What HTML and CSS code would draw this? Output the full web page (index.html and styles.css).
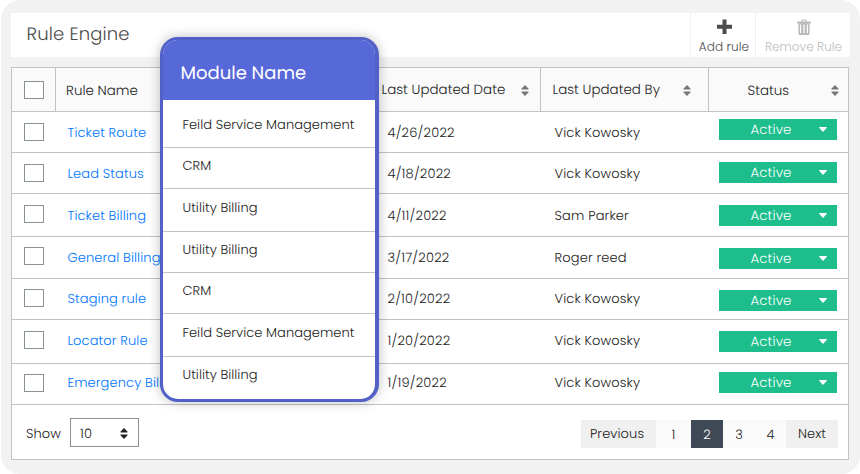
FILE: index.html
```html
<!DOCTYPE html>
<html lang="en">
<head>
<meta charset="utf-8">
<title>Rule Engine</title>
<link rel="stylesheet" href="styles.css">
</head>
<body>
<svg width="0" height="0" class="defs" aria-hidden="true">
  <symbol id="sort" viewBox="0 0 8 11"><path d="M4 0 7.6 3.7Q8 4.5 7 4.5H1Q0 4.5.4 3.7ZM4 11 .4 7.3Q0 6.5 1 6.5H7Q8 6.5 7.6 7.3Z"/></symbol>
  <symbol id="caret" viewBox="0 0 8 5"><path d="M.6 0H7.4Q8.2.3 7.6 1L4.5 4.6Q4 5 3.5 4.6L.4 1Q-.2.3.6 0Z"/></symbol>
</svg>
<main class="panel">
  <header class="toolbar">
    <h1 class="title">Rule Engine</h1>
    <button class="tool add">
      <svg width="15" height="15" viewBox="0 0 15 15"><path d="M5.5 0h4v5.3H15v3.9H9.5V14.5h-4V9.2H0V5.3h5.5Z"/></svg>
      <span>Add rule</span>
    </button>
    <button class="tool remove">
      <svg width="14" height="16" viewBox="0 0 14 16"><path fill-rule="evenodd" d="M4 2.6 4.8.5H9.2L10 2.6H14V4.2H12.6V14.4Q12.4 15.9 11 15.9H3Q1.6 15.9 1.4 14.4V4.2H0V2.6ZM5.2 2.6H8.8L8.5 1.6H5.5ZM3 5.5V13.9H4.1V5.5ZM6.4 5.5V13.9H7.6V5.5ZM9.9 5.5V13.9H11V5.5Z"/></svg>
      <span>Remove Rule</span>
    </button>
  </header>

  <section class="table">
    <div class="row head">
      <div class="c-check"><span class="box"></span></div>
      <div class="c-name">Rule Name</div>
      <div class="c-date"><span>Last Updated Date</span><svg class="sort"><use href="#sort"/></svg></div>
      <div class="c-by"><span>Last Updated By</span><svg class="sort"><use href="#sort"/></svg></div>
      <div class="c-status"><span>Status</span><svg class="sort"><use href="#sort"/></svg></div>
    </div>
    <div class="row r1"><div class="c-check"><span class="box"></span></div><a class="c-name">Ticket Route</a><div class="c-date">4/26/2022</div><div class="c-by">Vick Kowosky</div><div class="c-status"><span class="badge">Active<svg class="caret"><use href="#caret"/></svg></span></div></div>
    <div class="row r2"><div class="c-check"><span class="box"></span></div><a class="c-name">Lead Status</a><div class="c-date">4/18/2022</div><div class="c-by">Vick Kowosky</div><div class="c-status"><span class="badge">Active<svg class="caret"><use href="#caret"/></svg></span></div></div>
    <div class="row r3"><div class="c-check"><span class="box"></span></div><a class="c-name">Ticket Billing</a><div class="c-date">4/11/2022</div><div class="c-by">Sam Parker</div><div class="c-status"><span class="badge">Active<svg class="caret"><use href="#caret"/></svg></span></div></div>
    <div class="row r4"><div class="c-check"><span class="box"></span></div><a class="c-name">General Billing</a><div class="c-date">3/17/2022</div><div class="c-by">Roger reed</div><div class="c-status"><span class="badge">Active<svg class="caret"><use href="#caret"/></svg></span></div></div>
    <div class="row r5"><div class="c-check"><span class="box"></span></div><a class="c-name">Staging rule</a><div class="c-date">2/10/2022</div><div class="c-by">Vick Kowosky</div><div class="c-status"><span class="badge">Active<svg class="caret"><use href="#caret"/></svg></span></div></div>
    <div class="row r6"><div class="c-check"><span class="box"></span></div><a class="c-name">Locator Rule</a><div class="c-date">1/20/2022</div><div class="c-by">Vick Kowosky</div><div class="c-status"><span class="badge">Active<svg class="caret"><use href="#caret"/></svg></span></div></div>
    <div class="row r7"><div class="c-check"><span class="box"></span></div><a class="c-name">Emergency Billing</a><div class="c-date">1/19/2022</div><div class="c-by">Vick Kowosky</div><div class="c-status"><span class="badge">Active<svg class="caret"><use href="#caret"/></svg></span></div></div>
    <footer class="foot">
      <span class="show">Show</span>
      <span class="select">10<svg class="sort"><use href="#sort"/></svg></span>
      <nav class="pager">
        <span class="pg prev">Previous</span><span class="pg one">1</span><span class="pg current">2</span><span class="pg">3</span><span class="pg four">4</span><span class="pg next">Next</span>
      </nav>
    </footer>
  </section>

  <aside class="module">
    <h2>Module Name</h2>
    <ul>
      <li>Feild Service Management</li>
      <li>CRM</li>
      <li>Utility Billing</li>
      <li>Utility Billing</li>
      <li>CRM</li>
      <li>Feild Service Management</li>
      <li>Utility Billing</li>
    </ul>
  </aside>
</main>
</body>
</html>
```
FILE: styles.css
```css
* { box-sizing: border-box; }
body {
  margin: 0;
  background: #fff;
  color: #222;
  font: 300 13px/20px Poppins, Inter, "Open Sans", sans-serif;
  font-feature-settings: "cv11";
  letter-spacing: .1px;
  text-rendering: geometricPrecision;
}
.defs { position: absolute; }
.panel {
  position: relative;
  width: 859px;
  height: 474px;
  margin-left: 1px;
  padding: 13px 10px 14px;
  background: #f2f2f2;
  border-radius: 19px;
}
.toolbar { display: flex; height: 44px; background: #fff; }
.title { flex: 1; margin: 0; padding-left: 15.5px; font-size: 18px; font-weight: 300; line-height: 44px; color: #4c4c4c; letter-spacing: .15px; }
.tool {
  display: flex; flex-direction: column; align-items: center;
  border: 0; border-left: 1px solid #f0f0f0; background: none; padding: 6px 0 0;
  font: inherit; font-size: 12px; line-height: 17px; color: #555; font-feature-settings: inherit;
}
.tool svg { flex: none; height: 16px; margin-bottom: 3px; fill: currentColor; }
.add { width: 65px; padding-left: 2px; letter-spacing: .1px; color: #4c4c4c; }
.remove { width: 95px; padding-left: 1px; color: #bbb; letter-spacing: .05px; }

.table { margin-top: 10px; width: 838px; border: 1px solid #c2c3c8; background: #fff; }
.row { display: grid; grid-template-columns: 44px 320px 165px 168px 1fr; border-bottom: 1px solid #c2c3c8; height: 41px; --text: 11px; --box: 11px; --badge: 11px; }
.head { height: 44px; background: #fafafa; --text: 12px; --box: 13px; font-size: 13.4px; }
.r1 { --badge: 7px; }
.r2 { --badge: 9px; }
.r3 { height: 43px; --text: 12px; }
.r4 { height: 42px; --box: 10px; }
.r5 { --text: 10px; --box: 10px; }
.r6 { height: 44px; }
.r7 { --text: 9px; --box: 10px; --badge: 8px; }
.row > * { padding-top: var(--text); white-space: nowrap; }
.row > .c-check { padding: var(--box) 0 0 12px; }
.box { display: block; width: 20px; height: 18px; border: 1px solid #879290; background: #fff; }
.c-name { padding-left: 11.5px; color: #0075ff; letter-spacing: .12px; }
.c-date { padding-left: 11.5px; letter-spacing: .2px; }
.c-by { padding-left: 13.5px; letter-spacing: .15px; }
.row:not(.head) > .c-status { padding: var(--badge) 0 0 10px; }
.head > * { display: flex; letter-spacing: .03px; }
.head > .c-check { border-right: 1px solid #c2c3c8; }
.head > .c-name { padding-top: 13px; padding-left: 10px; color: inherit; }
.head > .c-date { padding-left: 5.5px; border-right: 1px solid #c2c3c8; }
.head > .c-by { padding-left: 11.5px; border-right: 1px solid #c2c3c8; }
.head > .c-status { padding-top: 13px; padding-left: 38.5px; }
.sort { width: 8px; height: 11px; margin: 5px 11px 0 auto; fill: #777; }
.c-by .sort { margin-right: 17px; }
.c-status .sort { margin: 4px 9px 0 auto; }
.badge {
  display: flex; align-items: center; width: 118px; height: 21px; padding: 0 10px 0 31.5px;
  background: #1dbe8b; color: #fff; font-size: 13.3px; letter-spacing: .15px;
}
.caret { width: 8px; height: 5px; margin-left: auto; fill: #fff; }

.foot { display: flex; height: 54px; padding: 13px 10px 0 14px; }
.show { width: 44px; padding-top: 6px; letter-spacing: .1px; }
.select { display: flex; width: 69px; height: 29px; padding: 5px 10px 0 9px; border: 1px solid #879290; }
.select .sort { margin: 4px 0 0 auto; fill: #222; }
.pager { display: flex; margin: 2px 0 0 auto; height: 28px; text-align: center; line-height: 29px; }
.pg { width: 32px; background: #fafafa; }
.prev { width: 75px; padding-right: 3px; background: #f0f0f0; line-height: 28px; }
.one { width: 35px; }
.current { background: #3f4a56; color: #fff; }
.four { width: 31px; }
.next { width: 52px; background: #f0f0f0; line-height: 28px; }

.module {
  position: absolute; left: 159px; top: 37px; width: 219px; height: 365px;
  border: 3px solid #5261c8; border-right-width: 4px; border-radius: 18px;
  background: #fff; box-shadow: 0 0 12px rgba(0, 0, 0, .26); overflow: hidden;
}
.module h2 { margin: 0; height: 60px; padding: 22px 0 0 17.5px; background: #5768d9; color: #fff; font-size: 18px; line-height: 24px; font-weight: 400; letter-spacing: 0; }
.module ul { list-style: none; margin: 0; padding: 0; }
.module li { height: 41px; padding: 8px 0 0 19.5px; border-bottom: 1px solid #c2c3c8; letter-spacing: .06px; }
.module li:first-child { height: 48px; padding-top: 15px; }
.module li:nth-child(3) { height: 43px; padding-top: 9px; }
.module li:nth-child(6) { height: 43px; padding-top: 9px; }
.module li:last-child { border: 0; }
```
